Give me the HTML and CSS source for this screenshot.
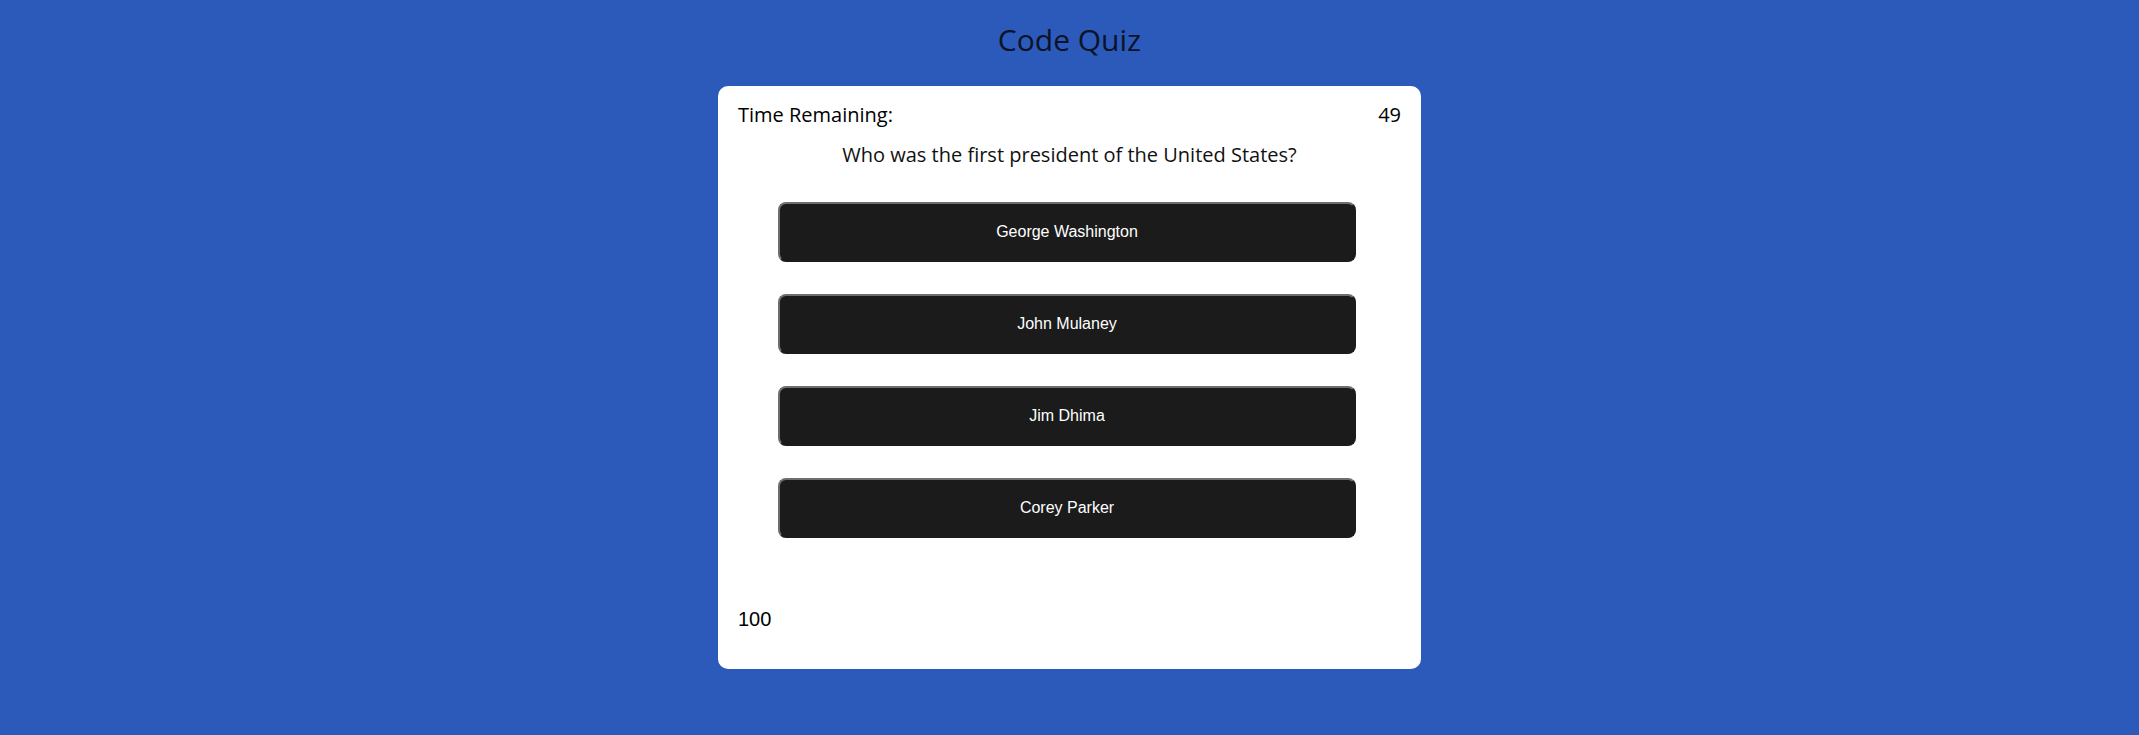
FILE: index.html
```html
<!DOCTYPE html>
<html lang="en">
<head>
<meta charset="utf-8">
<title>Code Quiz</title>
<link rel="stylesheet" href="styles.css">
</head>
<body>
  <h1 class="title">Code Quiz</h1>
  <main class="card">
    <div class="timer-row">
      <span class="timer-label">Time Remaining:</span>
      <span class="timer-value">49</span>
    </div>
    <p class="question">Who was the first president of the United States?</p>
    <div class="answers">
      <button class="answer">George Washington</button>
      <button class="answer">John Mulaney</button>
      <button class="answer">Jim Dhima</button>
      <button class="answer">Corey Parker</button>
    </div>
    <div class="score">100</div>
  </main>
</body>
</html>
```
FILE: styles.css
```css
html, body {
  margin: 0;
  padding: 0;
}

body {
  background: #2c5aba;
  font-family: "Open Sans", "Liberation Sans", sans-serif;
  color: #111;
  min-height: 735px;
}

.title {
  margin: 20px 0 26px;
  font-size: 30px;
  line-height: 40px;
  font-weight: 400;
  text-align: center;
  color: #0c1228;
}

.card {
  width: 703px;
  box-sizing: border-box;
  margin: 0 auto;
  background: #fff;
  border-radius: 10px;
  padding: 15px 20px 38px;
  display: flex;
  flex-direction: column;
}

.timer-row {
  display: flex;
  justify-content: space-between;
  font-size: 20px;
  line-height: 28px;
  font-weight: 500;
  color: #000;
}

.question {
  margin: 12px 0 0;
  font-size: 20px;
  line-height: 28px;
  text-align: center;
  color: #111;
}

.answers {
  margin-top: 33px;
  display: flex;
  flex-direction: column;
  gap: 32px;
  align-items: flex-start;
  padding-left: 40px;
}

.answer {
  width: 578px;
  height: 60px;
  box-sizing: border-box;
  background: #1b1b1b;
  color: #fff;
  font-family: "Liberation Sans", Arial, sans-serif;
  font-size: 16px;
  border-style: solid;
  border-width: 2px;
  border-color: #6e6e6e #1b1b1b #1b1b1b #6e6e6e;
  border-radius: 8px;
  cursor: pointer;
  padding: 0;
}

.score {
  margin-top: 69px;
  font-family: "Liberation Sans", Arial, sans-serif;
  font-size: 20px;
  line-height: 24px;
  color: #000;
}
```
